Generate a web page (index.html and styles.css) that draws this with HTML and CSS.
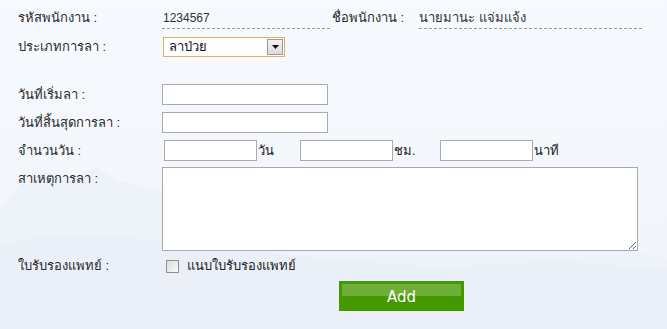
FILE: index.html
```html
<!DOCTYPE html>
<html lang="th">
<head>
    <meta charset="UTF-8">
    <title>ใบลา</title>
    <link rel="stylesheet" href="styles.css">
</head>
<body>
    <svg class="bg-hills" width="667" height="180" viewBox="0 0 667 180" preserveAspectRatio="none">
        <polygon points="0,60 20,35 45,22 70,30 95,18 120,32 160,40 200,55 260,70 330,80 420,95 520,100 600,95 667,110 667,180 0,180" fill="#eef3fa"/>
        <polygon points="0,95 60,85 140,90 230,100 330,110 440,118 560,112 667,120 667,180 0,180" fill="#ebf0f8"/>
    </svg>

    <form class="leave-form">
        <div class="row row-info">
            <span class="label">รหัสพนักงาน :</span>
            <span class="value value-id">1234567</span>
            <span class="label label-name">ชื่อพนักงาน :</span>
            <span class="value value-name">นายมานะ แจ่มแจ้ง</span>
        </div>

        <div class="row row-type">
            <span class="label">ประเภทการลา :</span>
            <div class="select-box">
                <span>ลาป่วย</span>
                <span class="select-arrow">
                    <svg width="7" height="4" viewBox="0 0 7 4"><polygon points="0,0 7,0 3.5,4" fill="#111"/></svg>
                </span>
            </div>
        </div>

        <div class="row row-date first-date">
            <span class="label">วันที่เริ่มลา :</span>
            <input type="text" class="field field-date">
        </div>

        <div class="row row-date">
            <span class="label">วันที่สิ้นสุดการลา :</span>
            <input type="text" class="field field-date">
        </div>

        <div class="row row-date">
            <span class="label">จำนวนวัน :</span>
            <div class="amount">
                <input type="text" class="field field-small">
                <span class="unit unit-day">วัน</span>
                <input type="text" class="field field-small">
                <span class="unit unit-hour">ชม.</span>
                <input type="text" class="field field-small">
                <span class="unit">นาที</span>
            </div>
        </div>

        <div class="row row-reason">
            <span class="label">สาเหตุการลา :</span>
            <textarea class="field reason"></textarea>
        </div>

        <div class="row row-cert">
            <span class="label">ใบรับรองแพทย์ :</span>
            <label class="check"><span class="checkbox"></span>แนบใบรับรองแพทย์</label>
        </div>

        <div class="actions">
            <button type="button" class="add-button"><span class="shine"></span>Add</button>
        </div>
    </form>
</body>
</html>
```

FILE: styles.css
```css
html, body {
    margin: 0;
    height: 100%;
}
body {
    font-family: Tahoma, "Liberation Sans", "DejaVu Sans", sans-serif;
    font-size: 13px;
    color: #222;
    background: linear-gradient(#f6f9fd, #f3f7fc 60%, #eef3fa);
    position: relative;
    overflow: hidden;
}
.bg-hills {
    position: absolute;
    left: 0;
    bottom: 0;
    z-index: 0;
}
.leave-form {
    position: relative;
    z-index: 1;
    padding: 7px 0 0 18px;
}
.row {
    display: flex;
    align-items: center;
    line-height: 16px;
}
.label {
    width: 144px;
    flex-shrink: 0;
    color: #2a2a2a;
}
.value {
    height: 21px;
    line-height: 22px;
    border-bottom: 1px dashed #999;
    color: #333;
}
.value-id {
    width: 167px;
    padding-left: 1px;
    font-size: 12px;
}
.label-name {
    width: 87px;
    padding-left: 2px;
    align-self: flex-start;
    line-height: 22px;
}
.value-name {
    width: 223px;
}
.row-type {
    margin-top: 8px;
}
.select-box {
    width: 115px;
    height: 18px;
    margin-left: 1px;
    border: 1px solid #e0b15a;
    background: #fff;
    display: flex;
    align-items: center;
    justify-content: space-between;
    padding-left: 5px;
    box-sizing: content-box;
    color: #111;
}
.select-arrow {
    width: 14px;
    height: 14px;
    margin-right: 1px;
    border: 1px solid #9a9a9a;
    background: linear-gradient(#f4f4f4, #dcdcdc);
    display: flex;
    align-items: center;
    justify-content: center;
}
.row-date {
    margin-top: 7px;
}
.first-date {
    margin-top: 27px;
}
.field {
    margin: 0;
    border: 1px solid #aaa;
    background: #fff;
    box-sizing: border-box;
    font: inherit;
}
.field-date {
    width: 166px;
    height: 21px;
}
.amount {
    display: flex;
    align-items: center;
    margin-left: 2px;
}
.field-small {
    width: 93px;
    height: 21px;
}
.unit {
    padding-left: 1px;
}
.unit-day {
    width: 42px;
}
.unit-hour {
    width: 46px;
}
.row-reason {
    margin-top: 6px;
    align-items: flex-start;
}
.row-reason .label {
    padding-top: 4px;
}
.reason {
    width: 476px;
    height: 84px;
    resize: both;
    display: block;
}
.row-cert {
    margin-top: 7px;
}
.check {
    display: flex;
    align-items: center;
    margin-left: 4px;
}
.checkbox {
    width: 11px;
    height: 11px;
    border: 1px solid #8e8f8f;
    background: linear-gradient(135deg, #dcdcdc, #fbfbfb);
    margin-right: 8px;
}
.actions {
    padding-left: 321px;
    margin-top: 7px;
}
.add-button {
    position: relative;
    display: block;
    width: 125px;
    height: 30px;
    border: none;
    background: #449900;
    color: #fff;
    font-family: "DejaVu Sans", Tahoma, sans-serif;
    font-size: 15px;
    padding: 2px 0 0 0;
    cursor: pointer;
}
.shine {
    position: absolute;
    left: 3px;
    right: 3px;
    top: 3px;
    height: 12px;
    background: rgba(255, 255, 255, 0.22);
}
```
